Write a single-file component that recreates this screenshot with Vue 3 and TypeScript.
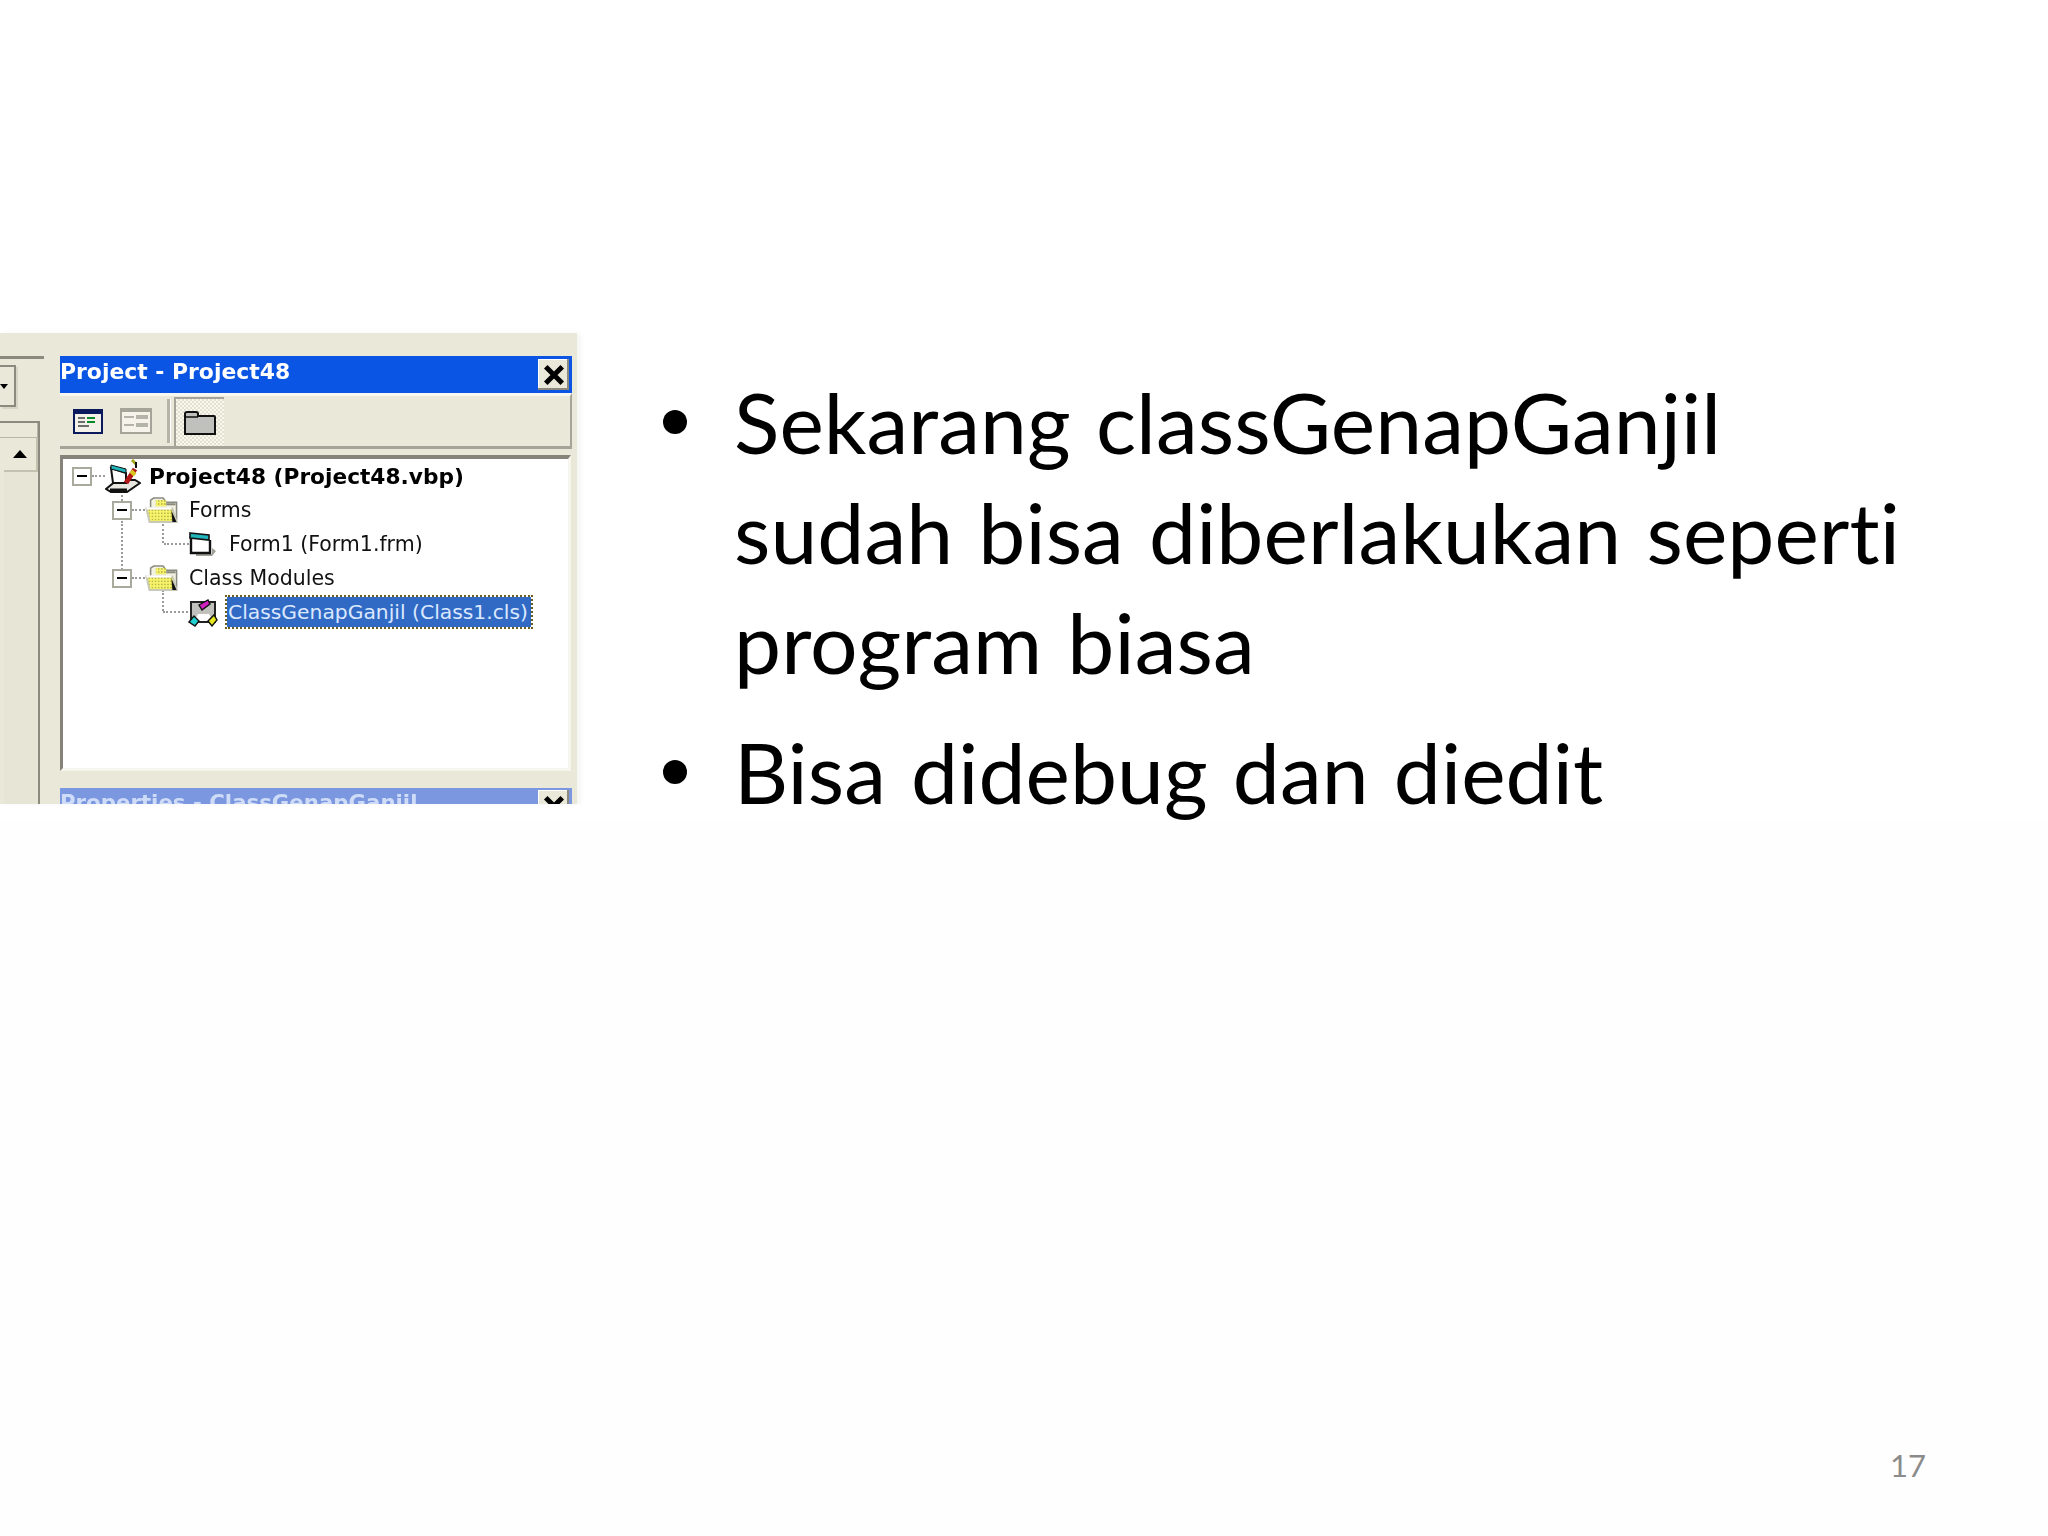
<script setup lang="ts">
interface Row { label: string; indent: number; box: boolean; icon: string; cls: string; iconGap: number }
const rows: Row[] = [
  { label: 'Project48 (Project48.vbp)', indent: 9, box: true, icon: 'project', cls: 'bold', iconGap: 8 },
  { label: 'Forms', indent: 49, box: true, icon: 'folder', cls: '', iconGap: 11 },
  { label: 'Form1 (Form1.frm)', indent: 126, box: false, icon: 'form', cls: '', iconGap: 12 },
  { label: 'Class Modules', indent: 49, box: true, icon: 'folder', cls: '', iconGap: 11 },
  { label: 'ClassGenapGanjil (Class1.cls)', indent: 125, box: false, icon: 'class', cls: 'selected', iconGap: 8 }
]
const bullets: string[] = [
  'Sekarang classGenapGanjil sudah bisa diberlakukan seperti program biasa',
  'Bisa didebug dan diedit'
]
</script>

<template>
  <div class="slide">
    <div class="main">
      <div class="shot">
        <div class="strip">
          <div class="strip-top"><span class="combo"><i class="combo-arrow"></i></span></div>
          <div class="strip-pane">
            <div class="strip-head"></div>
            <div class="scroll-up"><i class="up-arrow"></i></div>
            <div class="scroll-track"></div>
          </div>
        </div>
        <div class="window">
          <div class="titlebar">
            <span class="title-text">Project - Project48</span>
            <span class="close">
              <svg viewBox="0 0 16 16" width="22" height="22"><path d="M2 2L14 14M14 2L2 14" stroke="#000" stroke-width="3.6" /></svg>
            </span>
          </div>
          <div class="toolbar">
            <svg class="tool" viewBox="0 0 30 25" width="30" height="25" shape-rendering="crispEdges">
              <rect width="30" height="25" fill="#0a1a5c" />
              <rect x="2" y="5" width="26" height="18" fill="#f4f2e8" />
              <path d="M5 8h7v2H5zM5 12h7v2H5zM5 16h11v2H5z" fill="#6d6d6d" />
              <path d="M14 8h8v2h-8zM14 12h8v2h-8z" fill="#0a8a2a" />
            </svg>
            <svg class="tool" viewBox="0 0 30 25" width="32" height="30" shape-rendering="crispEdges">
              <rect width="30" height="25" fill="#a5a499" />
              <rect x="2" y="4" width="26" height="19" fill="#f6f4ea" />
              <path d="M4 8h9v2H4zM4 15h9v2H4zM15 7h11v4H15zM15 14h11v4H15z" fill="#b5b4a8" />
            </svg>
            <span class="sep"></span>
            <span class="tool-active">
              <svg viewBox="0 0 32 25" width="32" height="25">
                <path d="M1 24V4q0-2 2-2h9q2 0 2 2v2h16q1 0 1 1v17z" fill="#c0c0bc" stroke="#111" stroke-width="2" />
                <path d="M1 7h13" stroke="#111" stroke-width="1.5" />
              </svg>
            </span>
          </div>
          <div class="tree">
            <i class="vline vline-a"></i>
            <i class="vline vline-b"></i>
            <i class="vline vline-c"></i>
            <i class="vline vline-d"></i>
            <div v-for="r in rows" :key="r.label" class="row" :style="{ paddingLeft: r.indent + 'px' }">
              <span v-if="r.box" class="box"><i></i></span>
              <span class="dots" :class="{ long: !r.box }"></span>
              <span class="icon" :style="{ marginRight: r.iconGap + 'px' }">
                <svg v-if="r.icon === 'project'" viewBox="0 0 36 34" width="36" height="34">
                  <path d="M1 30L12 21H30L35 24L22 33H6z" fill="#e8e8e0" stroke="#111" stroke-width="2" />
                  <path d="M5 31H22" stroke="#111" stroke-width="3" />
                  <path d="M6 9L21 14V24H8z" fill="#fff" stroke="#111" stroke-width="2" />
                  <path d="M6 6L21 10V14L6 10z" fill="#1fb4ba" stroke="#111" stroke-width="1" />
                  <path d="M21 24L30 10" stroke="#b01818" stroke-width="5" />
                  <path d="M26 12L30 16" stroke="#d8c820" stroke-width="4" />
                  <path d="M27 1L31 5" stroke="#a8a820" stroke-width="3" />
                  <path d="M31 3V9" stroke="#111" stroke-width="2" />
                </svg>
                <svg v-else-if="r.icon === 'folder'" class="folder" viewBox="0 0 31 26" width="33" height="27">
                  <defs>
                    <pattern id="dith" width="3" height="3" patternUnits="userSpaceOnUse">
                      <rect width="3" height="3" fill="#f7f36a" /><rect width="1.5" height="1.5" fill="#b9b94a" />
                    </pattern>
                  </defs>
                  <path d="M5 12V3L8 1H17L20 5H30V22H27" fill="#f4f2e0" stroke="#8a8a80" stroke-width="1.5" />
                  <rect x="10" y="3" width="10" height="6" fill="url(#dith)" />
                  <path d="M20 7H29" stroke="#8a8a80" stroke-width="2" />
                  <path d="M1 11H26L30 24H4z" fill="url(#dith)" stroke="#c9c9b8" stroke-width="2" />
                  <path d="M1 11H25" stroke="#fff" stroke-width="2" />
                  <path d="M25 13L30 24H26z" fill="#111" />
                </svg>
                <svg v-else-if="r.icon === 'form'" viewBox="0 0 28 26" width="28" height="26">
                  <path d="M7 23H23V17L27 20L23 25H7z" fill="#a0a098" />
                  <path d="M2 5V22H21V9" fill="#fff" stroke="#111" stroke-width="2.4" />
                  <path d="M1 2L20 4V9L1 7z" fill="#1fb4ba" stroke="#111" stroke-width="1.6" />
                </svg>
                <svg v-else viewBox="0 0 30 30" width="30" height="30">
                  <rect x="3" y="5" width="24" height="20" fill="#c0c0bc" stroke="#222" stroke-width="2" />
                  <path d="M6 24L10 17H21L25 24z" fill="#fff" />
                  <path d="M11 8L20 3L22 7L14 13z" fill="#d020c0" stroke="#111" stroke-width="1.4" />
                  <path d="M1 25L6 19L11 24L7 29z" fill="#1fd0d0" stroke="#111" stroke-width="1.4" />
                  <path d="M20 24L26 18L29 23L24 29z" fill="#e8e820" stroke="#111" stroke-width="1.4" />
                </svg>
              </span>
              <span class="label" :class="r.cls">{{ r.label }}</span>
            </div>
          </div>
          <div class="props">
            <span class="props-text">Properties - ClassGenapGanjil</span>
            <span class="close close-dim">
              <svg viewBox="0 0 16 16" width="22" height="22"><path d="M2 2L14 14M14 2L2 14" stroke="#000" stroke-width="3.6" /></svg>
            </span>
          </div>
        </div>
      </div>
      <ul class="bullets">
        <li v-for="b in bullets" :key="b"><span class="dot"></span><span class="btext">{{ b }}</span></li>
      </ul>
    </div>
    <div class="pagenum">17</div>
  </div>
</template>

<style scoped>
.slide {
  width: 2048px;
  height: 1536px;
  background: linear-gradient(#ffffff 0, #ffffff 820px, #fefefe 820px);
  display: flex;
  flex-direction: column;
  overflow: hidden;
}
.main {
  display: flex;
  align-items: flex-start;
  margin-top: 333px;
}
.shot {
  width: 577px;
  height: 471px;
  flex: none;
  overflow: hidden;
  display: flex;
  background: #e9e8d9;
  box-shadow: 4px 0 4px #f6f6f4;
  font-family: "DejaVu Sans", sans-serif;
}
.strip {
  width: 60px;
  flex: none;
  display: flex;
  flex-direction: column;
  padding-top: 23px;
}
.strip-top {
  width: 44px;
  height: 56px;
  border-top: 3px solid #8c8a7e;
  padding-top: 6px;
}
.combo {
  display: block;
  width: 14px;
  height: 38px;
  border: 2px solid #8c8a7e;
  border-left: 0;
  background: #e9e8d9;
  position: relative;
  box-shadow: 2px 2px 0 #d8d5c4;
}
.combo-arrow {
  position: absolute;
  left: 0;
  top: 17px;
  border: 4px solid transparent;
  border-top: 5px solid #000;
}
.strip-pane {
  width: 38px;
  flex: 1;
  display: flex;
  flex-direction: column;
  border-top: 2px solid #8c8a7e;
  border-right: 2px solid #8c8a7e;
}
.strip-head {
  height: 14px;
  background: #e9e8d9;
  border: 1px solid #b8b6a8;
  border-top: 0;
  border-left: 0;
}
.scroll-up {
  height: 32px;
  margin-left: 4px;
  background: #e9e8d9;
  border-bottom: 2px solid #c4c1b0;
  border-right: 2px solid #c4c1b0;
  display: flex;
  align-items: center;
  justify-content: center;
}
.up-arrow {
  border: 7px solid transparent;
  border-bottom: 8px solid #000;
  border-top: 0;
}
.scroll-track {
  flex: 1;
  margin-left: 4px;
  background: #e6e5d6;
}
.window {
  width: 512px;
  flex: none;
  padding-top: 23px;
  display: flex;
  flex-direction: column;
}
.titlebar {
  height: 37px;
  flex: none;
  background: #0a55e4;
  display: flex;
  align-items: center;
  justify-content: space-between;
  padding-right: 3px;
  color: #fff;
}
.title-text {
  font-weight: 700;
  font-size: 21.9px;
  padding-bottom: 6px;
  filter: blur(0.4px);
}
.close {
  width: 31px;
  height: 31px;
  background: #e9e8d9;
  box-shadow: inset -2px -2px 0 #8c8a7e, inset 1px 1px 0 #fff;
  display: flex;
  align-items: center;
  justify-content: center;
}
.toolbar {
  height: 50px;
  flex: none;
  display: flex;
  align-items: center;
  padding-left: 13px;
  border-top: 3px solid #f8f7f0;
  border-bottom: 3px solid #a6a498;
  border-right: 2px solid #a6a498;
}
.tool { margin-right: 17px; }
.tool + .tool { margin-right: 15px; }
.sep {
  width: 3px;
  height: 44px;
  background: #b6b4a8;
  border-right: 1px solid #fff;
  margin-right: 3px;
}
.tool-active {
  width: 48px;
  height: 47px;
  background: repeating-conic-gradient(#e4e1d0 0 25%, #f8f7f0 0 50%) 0 0 / 4px 4px;
  border-left: 2px solid #a6a498;
  border-top: 2px solid #a6a498;
  display: flex;
  align-items: center;
  justify-content: center;
}
.tree {
  margin-top: 6px;
  height: 316px;
  flex: none;
  width: 511px;
  background: #fff;
  border-top: 4px solid #85837a;
  border-left: 3px solid #85837a;
  border-right: 3px solid #f6f5ee;
  border-bottom: 3px solid #f6f5ee;
  position: relative;
  box-sizing: border-box;
}
.row {
  height: 34px;
  display: flex;
  align-items: center;
  position: relative;
}
.box {
  width: 20px;
  height: 19px;
  box-sizing: border-box;
  flex: none;
  background: #fff;
  border: 2px solid #a9a99e;
  display: flex;
  align-items: center;
  justify-content: center;
}
.box i {
  width: 10px;
  height: 2px;
  background: #000;
}
.dots {
  width: 13px;
  flex: none;
  border-top: 2px dotted #9a9a9a;
}
.dots.long {
  width: 25px;
  margin-left: -25px;
  margin-right: 0;
}
.icon {
  display: flex;
  flex: none;
}
.label {
  font-size: 20.5px;
  color: #111;
  white-space: nowrap;
  filter: blur(0.35px);
}
.bold { font-weight: 700; color: #000; font-size: 21.7px; }
.selected {
  background: #316ac5;
  color: #dbe8ff;
  outline: 2px dotted #6b5d20;
  height: 30px;
  line-height: 30px;
  padding: 0 3px 0 1px;
  margin-left: 1px;
  font-size: 20.3px;
  filter: none;
}
.vline {
  position: absolute;
  border-left: 2px dotted #9a9a9a;
}
.vline-a { left: 58px; top: 31px; height: 11px; }
.vline-b { left: 58px; top: 62px; height: 49px; }
.vline-c { left: 99px; top: 65px; height: 19px; }
.vline-d { left: 99px; top: 131px; height: 21px; }
.props {
  margin-top: 17px;
  height: 40px;
  flex: none;
  background: #7a97df;
  display: flex;
  align-items: flex-start;
  justify-content: space-between;
  padding: 2px 3px 0 0;
  color: #cfdcf8;
}
.props-text {
  font-weight: 700;
  font-size: 21.3px;
  filter: blur(0.4px);
}
.bullets {
  list-style: none;
  margin: 34px 0 0 86px;
  padding: 0;
  width: 1240px;
  font-family: Lato, "Liberation Sans", sans-serif;
  font-size: 84px;
  font-variant-ligatures: none;
  letter-spacing: 0.06px;
  word-spacing: 3.6px;
  color: #000;
  line-height: 110px;
}
.bullets li {
  display: flex;
  margin-bottom: 20px;
}
.dot {
  width: 24px;
  height: 24px;
  margin-top: 43px;
  margin-right: 47px;
  flex: none;
  border-radius: 50%;
  background: #000;
}
.btext { display: block; }
.pagenum {
  margin-top: auto;
  margin-bottom: 52px;
  margin-right: 122px;
  align-self: flex-end;
  font-family: Lato, "Liberation Sans", sans-serif;
  font-size: 31px;
  color: #8b8b8b;
}
</style>
